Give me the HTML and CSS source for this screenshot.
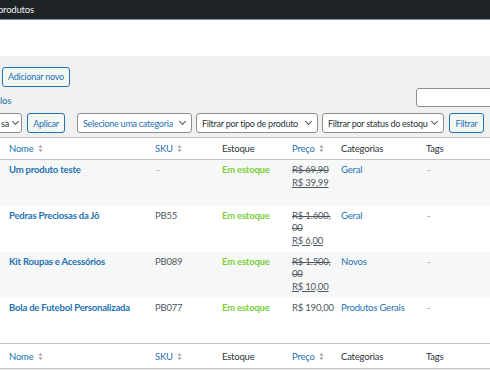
FILE: index.html
```html
<!DOCTYPE html>
<html lang="pt-BR">
<head>
    <meta charset="UTF-8">
    <title>Produtos</title>
    <link rel="stylesheet" href="styles.css">
</head>
<body>
    <div class="adminbar">
        <span class="adminbar-item">produtos</span>
    </div>
    <div class="header-band"></div>

    <div class="wrap">
        <div class="title-row">
            <a class="page-title-action">Adicionar novo</a>
        </div>

        <div class="subsub-row">
            <a class="subsubsub">los</a>
            <input class="search-input" type="text">
        </div>

        <div class="tablenav">
            <div class="select bulk"><span class="label">sa</span><span class="chev"></span></div>
            <button class="btn apply">Aplicar</button>
            <div class="select cat"><span class="label">Selecione uma categoria</span><span class="chev"></span></div>
            <div class="select type"><span class="label">Filtrar por tipo de produto</span><span class="chev"></span></div>
            <div class="select stock"><span class="label">Filtrar por status do estoque</span><span class="chev"></span></div>
            <button class="btn filter">Filtrar</button>
        </div>

        <table class="products">
            <colgroup>
                <col class="c-name">
                <col class="c-sku">
                <col class="c-stock">
                <col class="c-price">
                <col class="c-cat">
                <col class="c-tags">
            </colgroup>
            <thead>
                <tr>
                    <th class="sortable">Nome <svg class="sort" viewBox="0 0 6 10"><path d="M3 0.5 L5.5 4 H0.5 Z M3 9.5 L5.5 6 H0.5 Z"/></svg></th>
                    <th class="sortable">SKU <svg class="sort" viewBox="0 0 6 10"><path d="M3 0.5 L5.5 4 H0.5 Z M3 9.5 L5.5 6 H0.5 Z"/></svg></th>
                    <th>Estoque</th>
                    <th class="sortable">Preço <svg class="sort" viewBox="0 0 6 10"><path d="M3 0.5 L5.5 4 H0.5 Z M3 9.5 L5.5 6 H0.5 Z"/></svg></th>
                    <th>Categorias</th>
                    <th>Tags</th>
                </tr>
            </thead>
            <tbody>
                <tr class="alt">
                    <td><a class="row-title">Um produto teste</a></td>
                    <td class="muted">–</td>
                    <td class="instock">Em estoque</td>
                    <td class="price"><del>R$ 69,90</del><ins>R$ 39,99</ins></td>
                    <td><a class="cat">Geral</a></td>
                    <td class="muted">–</td>
                </tr>
                <tr>
                    <td><a class="row-title">Pedras Preciosas da Jô</a></td>
                    <td class="sku">PB55</td>
                    <td class="instock">Em estoque</td>
                    <td class="price"><del>R$ 1.600,<br>00</del><ins>R$ 6,00</ins></td>
                    <td><a class="cat">Geral</a></td>
                    <td class="muted">–</td>
                </tr>
                <tr class="alt">
                    <td><a class="row-title">Kit Roupas e Acessórios</a></td>
                    <td class="sku">PB089</td>
                    <td class="instock">Em estoque</td>
                    <td class="price"><del>R$ 1.500,<br>00</del><ins>R$ 10,00</ins></td>
                    <td><a class="cat">Novos</a></td>
                    <td class="muted">–</td>
                </tr>
                <tr>
                    <td><a class="row-title">Bola de Futebol Personalizada</a></td>
                    <td class="sku">PB077</td>
                    <td class="instock">Em estoque</td>
                    <td class="price"><span>R$ 190,00</span></td>
                    <td><a class="cat">Produtos Gerais</a></td>
                    <td class="muted">–</td>
                </tr>
            </tbody>
            <tfoot>
                <tr>
                    <th class="sortable">Nome <svg class="sort" viewBox="0 0 6 10"><path d="M3 0.5 L5.5 4 H0.5 Z M3 9.5 L5.5 6 H0.5 Z"/></svg></th>
                    <th class="sortable">SKU <svg class="sort" viewBox="0 0 6 10"><path d="M3 0.5 L5.5 4 H0.5 Z M3 9.5 L5.5 6 H0.5 Z"/></svg></th>
                    <th>Estoque</th>
                    <th class="sortable">Preço <svg class="sort" viewBox="0 0 6 10"><path d="M3 0.5 L5.5 4 H0.5 Z M3 9.5 L5.5 6 H0.5 Z"/></svg></th>
                    <th>Categorias</th>
                    <th>Tags</th>
                </tr>
            </tfoot>
        </table>
    </div>
</body>
</html>
```

FILE: styles.css
```css
body {
    margin: 0;
    width: 490px;
    height: 370px;
    overflow: hidden;
    background: #f0f0f1;
    font-family: 'Lato', 'Open Sans', sans-serif;
    font-size: 9.5px;
    letter-spacing: -0.2px;
    color: #3c434a;
}

.adminbar {
    height: 19px;
    background: #1d2327;
    border-bottom: 1px solid #8c8f94;
    color: #f0f0f1;
    line-height: 19px;
}

.adminbar-item {
    margin-left: -2px;
}

.header-band {
    height: 36px;
    background: #fff;
}

.wrap {
    padding-top: 11px;
}

.title-row {
    display: flex;
    padding-left: 2px;
}

.page-title-action {
    display: inline-block;
    height: 18px;
    line-height: 18px;
    padding: 0 5px;
    border: 1px solid #2271b1;
    border-radius: 3px;
    background: #f6f7f7;
    color: #2271b1;
    font-size: 9px;
    letter-spacing: -0.25px;
}

.subsub-row {
    display: flex;
    justify-content: space-between;
    align-items: flex-end;
    height: 20px;
}

.subsubsub {
    color: #2271b1;
    line-height: 12px;
}

.search-input {
    width: 80px;
    height: 19px;
    box-sizing: border-box;
    margin: 0 -6px 0 0;
    border: 1px solid #8c8f94;
    border-radius: 3px;
    background: #fff;
}

.tablenav {
    display: flex;
    align-items: center;
    gap: 5px;
    margin-top: 6px;
    height: 20px;
}

.select {
    display: flex;
    align-items: center;
    justify-content: space-between;
    height: 20px;
    box-sizing: border-box;
    padding: 0 4px 0 5px;
    border: 1px solid #8c8f94;
    border-radius: 3px;
    background: #fff;
    color: #2c3338;
    white-space: nowrap;
    flex: none;
    font-size: 9px;
    letter-spacing: -0.25px;
}

.select .label {
    overflow: hidden;
}

.select.bulk {
    width: 42px;
    margin-left: -20px;
    padding-left: 20px;
}

.select.bulk .label {
    overflow: visible;
}

.select.cat {
    width: 115px;
    margin-left: 7px;
}

.select.type {
    width: 122px;
    margin-left: -1px;
}

.select.stock {
    width: 122px;
    margin-left: -1px;
}

.select.stock .label {
    width: 101px;
}

.chev {
    flex: none;
    width: 4px;
    height: 4px;
    border-right: 1px solid #50575e;
    border-bottom: 1px solid #50575e;
    transform: rotate(45deg);
    margin: -3px 2px 0 4px;
}

.btn {
    height: 20px;
    padding: 0;
    border: 1px solid #2271b1;
    border-radius: 3px;
    background: #f6f7f7;
    color: #2271b1;
    font: inherit;
    font-size: 9px;
    letter-spacing: -0.25px;
    flex: none;
}

.btn.apply {
    width: 38px;
}

.btn.filter {
    width: 35px;
}

.products {
    margin-top: 4px;
    border-collapse: collapse;
    table-layout: fixed;
    width: 522px;
    background: #fff;
    border-top: 1px solid #c3c4c7;
}

.c-name { width: 148px; }
.c-sku { width: 67px; }
.c-stock { width: 70px; }
.c-price { width: 49px; }
.c-cat { width: 85px; }
.c-tags { width: 103px; }

.products th {
    text-align: left;
    font-weight: normal;
    color: #2c3338;
    height: 21px;
    padding: 0 7px;
    white-space: nowrap;
}

.products th.sortable {
    color: #2271b1;
}

.products th:first-child,
.products td:first-child {
    padding-left: 9px;
}

.products thead th {
    border-bottom: 1px solid #c3c4c7;
}

.products tfoot th {
    height: 24px;
    border-top: 1px solid #c3c4c7;
    border-bottom: 1px solid #c3c4c7;
}

.sort {
    width: 5px;
    height: 9px;
    fill: #a7aaad;
    vertical-align: -1px;
    margin-left: 2px;
}

.products td {
    vertical-align: top;
    height: 46px;
    box-sizing: border-box;
    padding: 4px 7px;
    line-height: 12px;
    white-space: nowrap;
}

.products tr.alt td {
    background: #f6f7f7;
}

.row-title {
    color: #2271b1;
    font-weight: bold;
}

.muted {
    color: #a7aaad;
}

.sku {
    color: #50575e;
}

.instock {
    color: #7ad03a;
    font-weight: bold;
}

.price {
    color: #50575e;
}

.price del,
.price ins {
    display: block;
}

.price ins {
    margin-top: 1px;
}

.cat {
    color: #2271b1;
}
```
